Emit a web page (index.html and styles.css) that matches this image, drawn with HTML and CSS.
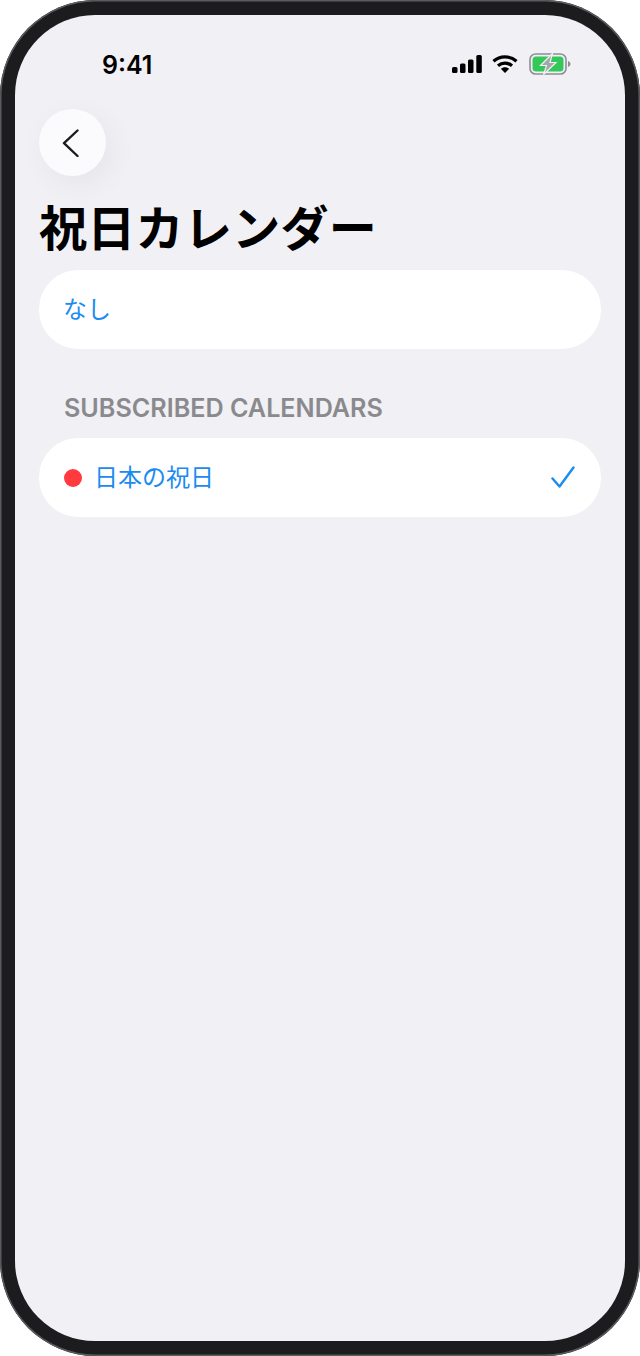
FILE: index.html
```html
<!DOCTYPE html>
<html lang="ja">

<head>
    <meta charset="UTF-8">
    <meta name="viewport" content="width=device-width, initial-scale=1.0">
    <title>祝日カレンダー</title>
    <link rel="stylesheet" href="styles.css">
</head>

<body>

    <div class="phone">
        <div class="screen">

            <!-- Status bar -->
            <div class="status-bar">
                <span class="time">9:41</span>
                <div class="status-icons">
                    <svg width="30" height="18" viewBox="0 0 30 18" fill="#000">
                        <rect x="0" y="12" width="5.5" height="6" rx="1.5" />
                        <rect x="8" y="8.5" width="5.5" height="9.5" rx="1.5" />
                        <rect x="16" y="4.5" width="5.5" height="13.5" rx="1.5" />
                        <rect x="24.3" y="0" width="5.5" height="18" rx="1.5" />
                    </svg>
                    <svg class="wifi" width="26" height="18" viewBox="0 0 26 18" fill="none" stroke="#000" stroke-width="3.2">
                        <path d="M1.5 6.2C8 0.3 18 0.3 24.5 6.2" />
                        <path d="M6 10.8C10 7.2 16 7.2 20 10.8" />
                        <path d="M13 18L8.8 13.8C11.2 11.7 14.8 11.7 17.2 13.8Z" fill="#000" stroke="none" />
                    </svg>
                    <svg class="battery" width="42" height="22" viewBox="0 0 42 22">
                        <rect x="1" y="1" width="36" height="20" rx="5.5" fill="none" stroke="#8e8e93" stroke-width="1.6" />
                        <rect x="3.5" y="3.5" width="31" height="15" rx="3.5" fill="#34c759" />
                        <path d="M39 8v6c1.5-.5 2.5-1.7 2.5-3s-1-2.5-2.5-3z" fill="#8e8e93" />
                        <path d="M23.5 0.5L11.5 12.5h6L14.5 21.5l12.5-12h-6z" fill="#a5a5aa" stroke="#f0f0f5" stroke-width="1.2" />
                    </svg>
                </div>
            </div>

            <div class="content">
                <button class="back-btn" aria-label="戻る">
                    <svg width="18" height="28" viewBox="0 0 18 28" fill="none" stroke="#1c1c1e" stroke-width="2.4" stroke-linecap="round" stroke-linejoin="round">
                        <path d="M16.5 1.5L3 14.2L16.5 27" />
                    </svg>
                </button>

                <h1>祝日カレンダー</h1>

                <div class="row">
                    <span class="row-text">なし</span>
                </div>

                <h2>SUBSCRIBED CALENDARS</h2>

                <div class="row">
                    <span class="dot"></span>
                    <span class="row-label">日本の祝日</span>
                    <svg class="check" width="24" height="23" viewBox="0 0 24 23" fill="none" stroke="#1a8cf0" stroke-width="2.4" stroke-linecap="round" stroke-linejoin="round">
                        <path d="M1.5 12.5L8.5 20.5L22.5 1.5" />
                    </svg>
                </div>
            </div>

        </div>
    </div>

</body>

</html>
```

FILE: styles.css
```css
* {
    box-sizing: border-box;
}

body {
    margin: 0;
    background: #ffffff;
    font-family: "Inter", "Noto Sans CJK JP", sans-serif;
}

.phone {
    width: 640px;
    height: 1356px;
    padding: 15px;
    background: #1c1c1e;
    border-radius: 96px;
    box-shadow: inset 0 0 0 1.5px #5a5a5e;
}

.screen {
    height: 100%;
    background: #f0f0f5;
    border-radius: 80px;
    overflow: hidden;
}

.status-bar {
    display: flex;
    justify-content: space-between;
    align-items: center;
    height: 50px;
    margin-top: 24px;
    padding: 0 54px 0 87px;
}

.time {
    padding-top: 2px;
    font-size: 25px;
    font-weight: 600;
    color: #000;
}

.status-icons {
    display: flex;
    align-items: center;
}

.wifi {
    margin-left: 10px;
}

.battery {
    margin-left: 11px;
}

.content {
    padding: 20px 24px 0;
}

.back-btn {
    display: flex;
    justify-content: center;
    align-items: center;
    width: 67px;
    height: 67px;
    padding: 0 6px 0 0;
    background: #fbfbfd;
    border: none;
    border-radius: 50%;
    box-shadow: 6px 8px 30px rgba(0, 0, 0, 0.05);
}

h1 {
    margin: 15px 0 11px 0;
    font-family: "Noto Sans CJK JP", sans-serif;
    font-size: 48px;
    font-weight: 700;
    letter-spacing: 0.3px;
    line-height: 68px;
    color: #000;
}

h2 {
    margin: 43px 0 14px 25px;
    font-family: "Inter", sans-serif;
    font-size: 25.15px;
    font-weight: 600;
    line-height: 32px;
    color: #8a8a8e;
}

.row {
    display: flex;
    align-items: center;
    height: 79px;
    padding: 0 26px 0 25px;
    background: #ffffff;
    border-radius: 39px;
    font-family: "Noto Sans CJK JP", sans-serif;
    font-size: 24px;
    color: #1a8cf0;
}

.row-text {
    margin: 0 0 4px -1px;
}

.dot {
    width: 18px;
    height: 18px;
    background: #ff3b3f;
    border-radius: 50%;
}

.row-label {
    margin: 0 0 4px 12px;
}

.check {
    margin-left: auto;
}
```
